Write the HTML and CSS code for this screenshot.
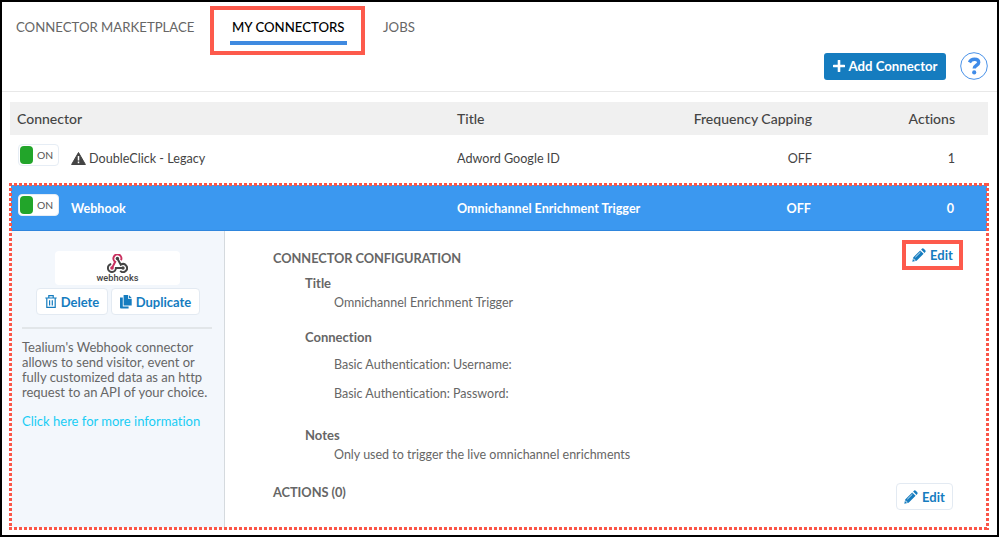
FILE: index.html
```
<!DOCTYPE html>
<html lang="en">
<head>
<meta charset="utf-8">
<title>My Connectors</title>
<link rel="stylesheet" href="styles.css">
</head>
<body>
<svg class="defs" width="0" height="0">
  <symbol id="pencil" viewBox="0 0 14 14">
    <path fill="currentColor" d="M0.3 13.7 1.2 9.4 8.2 2.4 11.6 5.8 4.6 12.8ZM9.1 1.5 10.2.5Q11 .1 11.8.7L13.3 2.2Q13.9 3 13.5 3.8L12.5 4.9Z"/>
    <path stroke="#fff" stroke-width=".8" fill="none" d="M3.3 9.2 8.4 4.2M1.7 10.5 2 12 3.5 12.3"/>
  </symbol>
</svg>
<div class="frame">
  <nav class="tabs">
    <a class="tab">CONNECTOR MARKETPLACE</a>
    <a class="tab tab-active">MY CONNECTORS</a>
    <a class="tab">JOBS</a>
  </nav>
  <div class="toolbar">
    <button class="add">
      <svg width="12" height="12" viewBox="0 0 12 12"><path d="M6 .8V11.2M.8 6H11.2" stroke="#fff" stroke-width="2.6" stroke-linecap="round"/></svg>
      <span>Add Connector</span>
    </button>
    <span class="help">
      <svg width="28" height="28" viewBox="0 0 28 28" fill="none"><circle cx="14" cy="14" r="13.3" stroke="#4a92e8"/><path d="M9.4 10.4C10.5 8.3 12.2 7.3 14.4 7.3 17 7.3 18.7 8.5 18.7 10.4 18.7 13.3 14.2 13.2 14.2 16.6" stroke="#3f8be8" stroke-width="3.4"/><circle cx="14.2" cy="20.4" r="2.1" fill="#3f8be8"/></svg>
    </span>
  </div>
  <div class="row head"><span>Connector</span><span>Title</span><span class="c3">Frequency Capping</span><span class="c4">Actions</span></div>
  <div class="row item">
    <span class="toggle"><i></i>ON</span>
    <span class="name"><svg width="15" height="13" viewBox="0 0 15 13"><path d="M7.5.5 14.4 12.5H.6Z" fill="#444" stroke="#444" stroke-width="1" stroke-linejoin="round"/><path d="M7.5 4.1V8.4M7.5 9.6V11.2" stroke="#fff" stroke-width="1.5"/></svg><span>DoubleClick - Legacy</span></span>
    <span>Adword Google ID</span><span class="c3">OFF</span><span class="c4">1</span>
  </div>
  <section class="selected">
    <div class="row item active">
      <span class="toggle"><i></i>ON</span>
      <span class="name">Webhook</span>
      <span>Omnichannel Enrichment Trigger</span><span class="c3">OFF</span><span class="c4">0</span>
    </div>
    <div class="detail">
      <aside class="side">
        <div class="logo">
          <svg width="21" height="19" viewBox="0 0 21 19" fill="none" stroke-width="2">
            <path stroke="#c9305f" d="M14 6.2A4 4 0 1 0 8.2 7.8L5.2 13.6"/>
            <path stroke="#444" d="M10.4 4.6 13.8 10.7A4 4 0 1 1 13.2 16.9"/>
            <path stroke="#444" d="M4.2 10A4 4 0 1 0 8.9 14H16"/>
            <circle cx="5" cy="14" r="1.8" fill="#c9305f"/><circle cx="10.4" cy="4.5" r="1.7" fill="#444"/><circle cx="16" cy="14" r="1.7" fill="#444"/>
          </svg>
          <span>webhooks</span>
        </div>
        <div class="buttons">
          <button class="btn del"><svg width="12" height="13" viewBox="0 0 12 13" fill="none" stroke="currentColor" stroke-width="1.2"><path d="M.3 3H11.7M3.8 2.8V.7H8.2V2.8M1.8 3.2V12.4H10.2V3.2M4.6 5.2V10.4M7.3 5.2V10.4"/></svg><span>Delete</span></button>
          <button class="btn dup"><svg width="12" height="14" viewBox="0 0 12 14" fill="currentColor"><path d="M3.6 0H8V3.7H11.7V10.6H3.6ZM8.8 0 11.7 2.9H8.8ZM0 2.6H2.8V11.4H8.6V13.5H.9Q0 13.5 0 12.6Z"/></svg><span>Duplicate</span></button>
        </div>
        <p class="about">Tealium's Webhook connector<br>allows to send visitor, event or<br>fully customized data as an http<br>request to an API of your choice.</p>
        <a class="more">Click here for more information</a>
      </aside>
      <main class="config">
        <div class="section"><h2>CONNECTOR CONFIGURATION</h2><button class="btn edit marked"><svg width="14" height="14"><use href="#pencil"/></svg><span>Edit</span></button></div>
        <h3 class="h-title">Title</h3>
        <p class="v-title">Omnichannel Enrichment Trigger</p>
        <h3 class="h-conn">Connection</h3>
        <p class="v-user">Basic Authentication: Username:</p>
        <p class="v-pass">Basic Authentication: Password:</p>
        <h3 class="h-notes">Notes</h3>
        <p class="v-notes">Only used to trigger the live omnichannel enrichments</p>
        <div class="section actions"><h2>ACTIONS (0)</h2><button class="btn edit"><svg width="14" height="14"><use href="#pencil"/></svg><span>Edit</span></button></div>
      </main>
    </div>
  </section>
</div>
</body>
</html>
```
FILE: styles.css
```
* { box-sizing: border-box; }
body { margin: 0; font-family: Lato, "Open Sans", sans-serif; font-variant-ligatures: none; color: #666; }
h2, h3, p { margin: 0; }
button { font-family: inherit; margin: 0; padding: 0; }
.defs { position: absolute; }
.frame { width: 999px; height: 537px; border: 2px solid #000; background: #fff; overflow: hidden; }

.tabs { display: flex; height: 49px; margin-top: 4px; padding-left: 14px; font-size: 13.2px; color: #666; }
.tab { height: 49px; line-height: 42px; white-space: nowrap; }
.tab:first-child { width: 194px; }
.tab-active { width: 155px; margin-right: 18px; padding: 0 16px 0 18px; border: 4px solid #fd5a4c; color: #000; font-weight: 500; line-height: 34px; background: linear-gradient(#3f8ae0, #3f8ae0) 16px 31px / 117px 4px no-repeat; }

.toolbar { display: flex; justify-content: flex-end; align-items: center; height: 37px; margin-bottom: 10px; padding: 0 9px 14px 0; border-bottom: 1px solid #e8e8e8; gap: 14px; }
.add { display: flex; align-items: center; justify-content: center; gap: 4px; width: 122px; height: 27px; border: 0; border-radius: 3px; background: #157cbf; color: #fff; font-size: 13.2px; font-weight: 700; }
.help { display: flex; }

.row { display: grid; grid-template-columns: 440px minmax(0, 1fr) 169px 143px; align-items: center; white-space: nowrap; }
.head { height: 33px; margin: 0 9px 0 8px; padding: 0 33px 1px 7px; background: #f0f0f0; font-size: 14px; color: #444; font-weight: 500; }
.item { grid-template-columns: 54px 386px minmax(0, 1fr) 169px 143px; height: 49px; margin: 0 9px 0 8px; padding: 0 33px 3px 7px; font-size: 12.6px; color: #444; }
.c3, .c4 { text-align: right; }
.name { display: flex; align-items: center; gap: 3px; }
.toggle { display: flex; align-items: center; gap: 4px; width: 41px; height: 22px; margin: -6px 0 0 1px; padding-left: 1px; border: 1px solid #e6edf5; border-radius: 4px; background: #fff; color: #555; font-size: 10.3px; font-weight: 400; }
.toggle i { width: 13px; height: 18px; border-radius: 4px; background: #22a52a; }

.selected { position: relative; width: 980px; height: 347px; margin: -1px 0 0 7px; padding: 2px; }
.selected::after {
  content: ""; position: absolute; inset: 0; pointer-events: none;
  background:
    repeating-linear-gradient(90deg, #fb5548 0 3px, transparent 3px 5px) 0 0 / 100% 3px no-repeat,
    repeating-linear-gradient(90deg, #fb5548 0 3px, transparent 3px 5px) 0 100% / 100% 3px no-repeat,
    repeating-linear-gradient(#fb5548 0 3px, transparent 3px 5px) 0 0 / 3px 100% no-repeat,
    repeating-linear-gradient(#fb5548 0 3px, transparent 3px 5px) 100% 0 / 3px 100% no-repeat;
}
.active { height: 46px; margin: 0; padding: 1px 33px 0 6px; border-bottom: 1px solid #2f86dd; background: #3b98f0; color: #fff; font-weight: 700; }
.detail { display: flex; height: 297px; }
.side { width: 214px; padding: 20px 12px 0 11px; background: #f3f7fc; border-right: 1px solid #d5dade; font-size: 13px; }
.logo { display: flex; flex-direction: column; align-items: center; width: 125px; height: 34px; margin-left: 33px; padding-top: 3px; border-radius: 4px; background: #fff; color: #444; font: 500 9.2px/9px Roboto, sans-serif; }
.logo svg { flex: none; }
.buttons { display: flex; gap: 3px; margin: 3px 0 12px 14px; }
.btn { display: flex; align-items: center; justify-content: center; gap: 4px; height: 27px; border: 1px solid #e3eaf2; border-radius: 4px; background: #fff; color: #157cbf; font-size: 13px; font-weight: 700; }
.del { width: 72px; }
.dup { width: 89px; }
.about { padding-top: 11px; border-top: 2px solid #e2e6e9; line-height: 15px; white-space: nowrap; }
.more { display: block; margin-top: 14px; line-height: 15px; color: #19cdf5; white-space: nowrap; }

.config { flex: 1; padding: 9px 24px 0 48px; font-size: 12.5px; line-height: 16px; }
.section { display: flex; justify-content: space-between; height: 30px; }
.config h2 { padding-top: 10px; font-size: 12.8px; font-weight: 700; letter-spacing: -0.05px; line-height: 16px; }
.config h3 { padding-left: 32px; font-size: 13px; font-weight: 700; }
.config p { padding-left: 61px; }
.edit { width: 57px; margin: 9px 10px 0 0; }
.marked { width: 61px; height: 30px; margin: 0; border: 4px solid #fd5a4c; border-radius: 0; }
.h-title { margin-top: 5px; }
.v-title { margin-top: 4px; }
.h-conn { margin-top: 18px; }
.v-user { margin-top: 12px; }
.v-pass { margin-top: 13px; }
.h-notes { margin-top: 25px; }
.v-notes { margin-top: 4px; }
.actions { margin-top: 11px; }
```
